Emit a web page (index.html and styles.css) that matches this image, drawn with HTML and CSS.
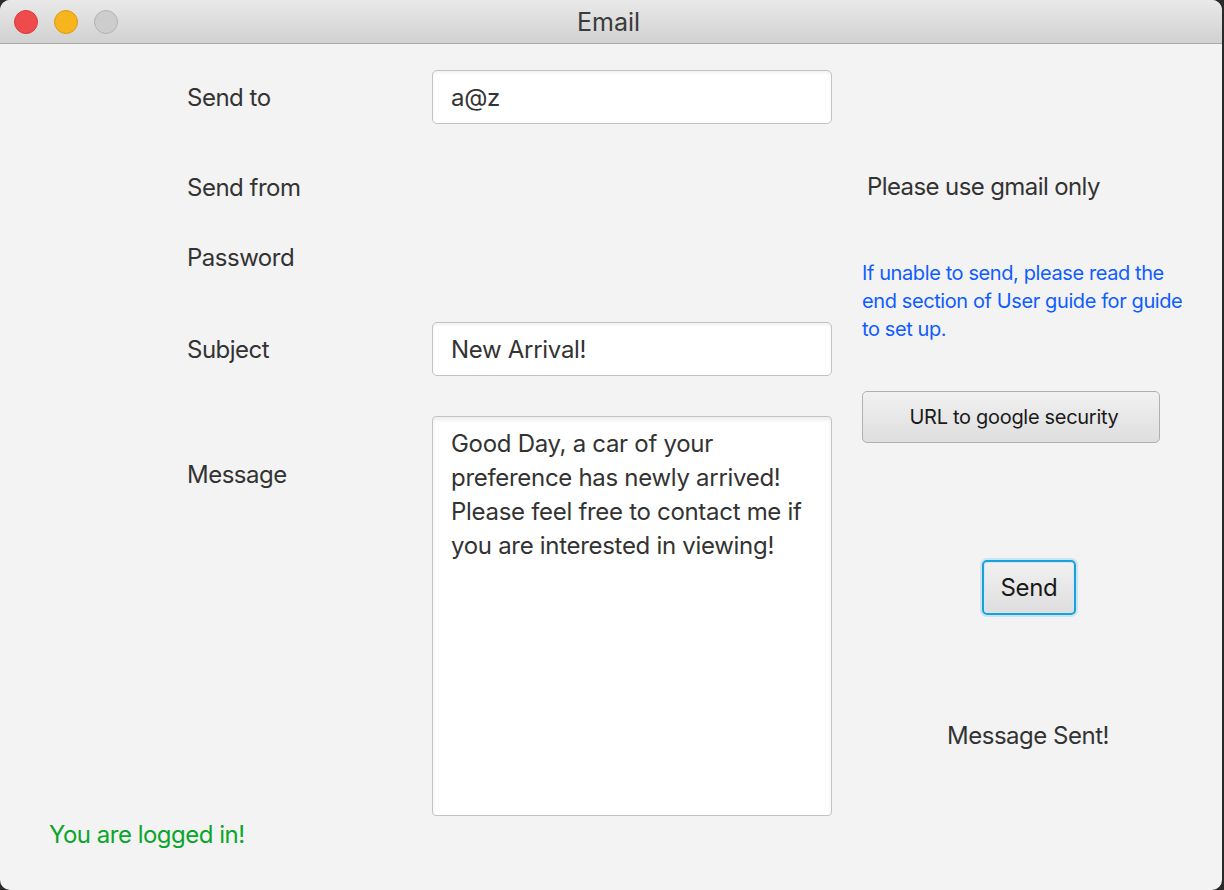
FILE: index.html
```html
<!DOCTYPE html>
<html>
<head>
<meta charset="utf-8">
<link rel="stylesheet" href="styles.css">
</head>
<body>
<div class="window">
  <div class="titlebar">
    <div class="lights">
      <span class="light red"></span>
      <span class="light yellow"></span>
      <span class="light gray"></span>
    </div>
    <div class="title">Email</div>
  </div>
  <div class="content">
    <div class="main">
      <div class="form">
        <div class="row r1">
          <div class="label">Send to</div>
          <div class="field">a@z</div>
        </div>
        <div class="row r2">
          <div class="label">Send from</div>
        </div>
        <div class="row r3">
          <div class="label">Password</div>
        </div>
        <div class="row r4">
          <div class="label">Subject</div>
          <div class="field">New Arrival!</div>
        </div>
        <div class="row r5">
          <div class="label msg-label">Message</div>
          <div class="textarea">Good Day, a car of your preference has newly arrived! Please feel free to contact me if you are interested in viewing!</div>
        </div>
      </div>
      <div class="side">
        <div class="gmail">Please use gmail only</div>
        <div class="hint">If unable to send, please read the end section of User guide for guide to set up.</div>
        <div class="url-btn">URL to google security</div>
        <div class="send-btn">Send</div>
        <div class="sent">Message Sent!</div>
      </div>
    </div>
    <div class="status">You are logged in!</div>
  </div>
</div>
</body>
</html>
```

FILE: styles.css
```css
* { box-sizing: border-box; }
html, body {
  margin: 0;
  padding: 0;
  background: #2a2a2a;
  width: 1224px;
  height: 890px;
  overflow: hidden;
}
body {
  font-family: Inter, "Noto Sans", sans-serif;
  color: #333333;
}
.window {
  width: 1222px;
  height: 890px;
  background: #f3f3f3;
  border-radius: 10px;
  overflow: hidden;
  display: flex;
  flex-direction: column;
}
.titlebar {
  height: 44px;
  flex: none;
  background: linear-gradient(#e9e9e9, #d1d1d1);
  border-bottom: 1px solid #a9a9a9;
  display: flex;
  align-items: center;
  justify-content: center;
  position: relative;
}
.lights {
  position: absolute;
  left: 14px;
  top: 10px;
  display: flex;
  gap: 16px;
}
.light {
  width: 24px;
  height: 24px;
  border-radius: 50%;
  display: block;
}
.red { background: #f04b4c; border: 1px solid #d83a3c; }
.yellow { background: #f6b41d; border: 1px solid #dc9a14; }
.gray { background: #cdcdcd; border: 1px solid #b2b2b2; }
.title {
  font-size: 25px;
  color: #3b3b3b;
  margin-left: -5px;
}
.content {
  flex: 1;
  display: flex;
  flex-direction: column;
}
.main {
  display: flex;
  padding-left: 187px;
}
.form {
  display: flex;
  flex-direction: column;
  width: 675px;
}
.row {
  display: flex;
  align-items: center;
  height: 54px;
}
.r1 { margin-top: 26px; }
.r2 { margin-top: 36px; }
.r3 { margin-top: 16px; }
.r4 { margin-top: 38px; }
.r5 { margin-top: 40px; height: 400px; align-items: flex-start; }
.label {
  width: 245px;
  flex: none;
  font-size: 24px;
  letter-spacing: -0.5px;
  color: #333;
}
.msg-label { margin-top: 44px; }
.field {
  width: 400px;
  height: 54px;
  background: #fff;
  border: 1px solid #c3c3c3;
  border-radius: 5px;
  box-shadow: inset 0 2px 3px rgba(0,0,0,0.06);
  padding: 0 18px;
  display: flex;
  align-items: center;
  font-size: 24px;
  letter-spacing: -0.3px;
  color: #333;
}
.textarea {
  width: 400px;
  height: 400px;
  background: #fff;
  border: 1px solid #c3c3c3;
  border-radius: 4px;
  box-shadow: inset 0 3px 4px rgba(0,0,0,0.07);
  padding: 10px 18px;
  font-size: 24px;
  line-height: 34px;
  letter-spacing: -0.3px;
  color: #333;
}
.side {
  display: flex;
  flex-direction: column;
  width: 332px;
}
.gmail {
  margin-top: 128px;
  padding-left: 5px;
  font-size: 24px;
  line-height: 30px;
  letter-spacing: -0.6px;
}
.hint {
  margin-top: 57px;
  font-size: 20px;
  line-height: 28px;
  letter-spacing: -0.4px;
  color: #0f5cff;
  width: 330px;
}
.url-btn {
  margin-top: 48px;
  width: 298px;
  height: 52px;
  border: 1px solid #b0b0b0;
  border-radius: 5px;
  background: linear-gradient(#f1f1f1, #dedede);
  display: flex;
  align-items: center;
  justify-content: center;
  font-size: 20px;
  letter-spacing: -0.3px;
  color: #1a1a1a;
  padding-left: 6px;
}
.send-btn {
  margin-top: 117px;
  align-self: center;
  width: 94px;
  height: 55px;
  border: 2px solid #1aa0dc;
  border-radius: 5px;
  box-shadow: 0 0 0 2px rgba(26,160,220,0.18), inset 0 0 0 1px #cfe9f5;
  background: linear-gradient(#f1f1f1, #dedede);
  display: flex;
  align-items: center;
  justify-content: center;
  font-size: 24px;
  letter-spacing: -0.3px;
  color: #1a1a1a;
  margin-left: 2px;
}
.sent {
  margin-top: 106px;
  align-self: center;
  font-size: 24px;
  line-height: 30px;
  letter-spacing: -0.5px;
}
.status {
  margin-top: 4px;
  padding-left: 49px;
  font-size: 24px;
  line-height: 30px;
  letter-spacing: -0.5px;
  color: #0aa52a;
}
```
